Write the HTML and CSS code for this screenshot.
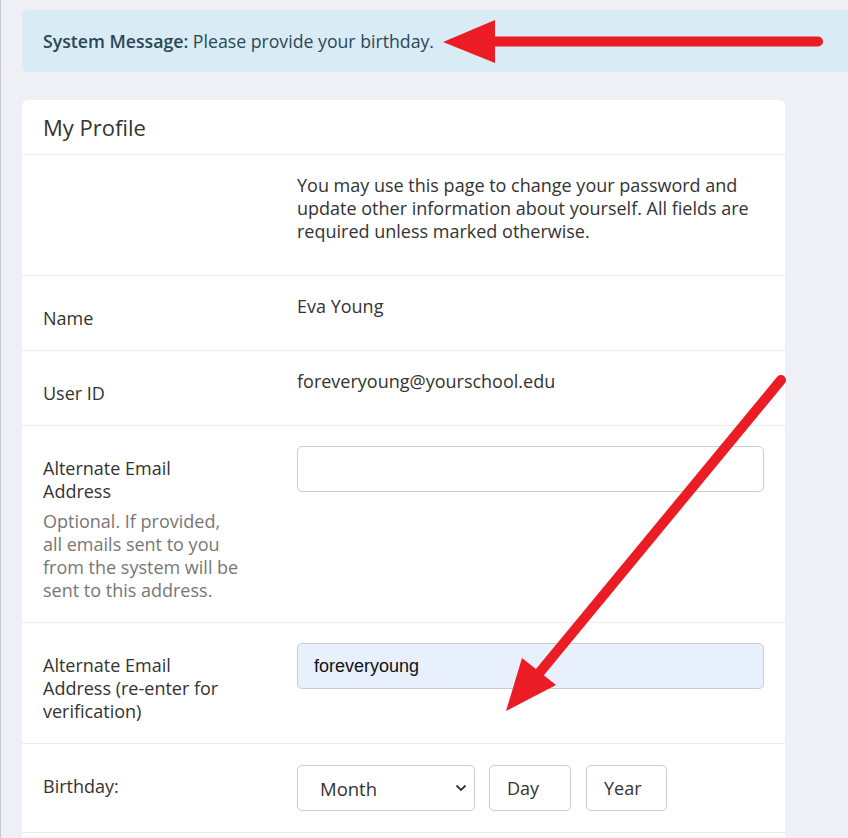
FILE: index.html
```html
<!DOCTYPE html>
<html lang="en">
<head>
  <meta charset="UTF-8">
  <meta name="viewport" content="width=device-width, initial-scale=1.0">
  <title>My Profile</title>
  <link rel="stylesheet" href="styles.css">
</head>
<body>
  <div class="page">
    <div class="alert">
      <b>System Message:</b>&nbsp;Please provide your birthday.
    </div>

    <div class="card">
      <div class="card-header">My Profile</div>

      <div class="row intro">
        <div class="label"></div>
        <div class="value">
          You may use this page to change your password and update other information about yourself. All fields are required unless marked otherwise.
        </div>
      </div>

      <div class="row">
        <div class="label">Name</div>
        <div class="value">Eva Young</div>
      </div>

      <div class="row">
        <div class="label">User ID</div>
        <div class="value">foreveryoung@yourschool.edu</div>
      </div>

      <div class="row">
        <div class="label">
          <label for="altEmail">Alternate Email Address</label>
          <div class="hint">Optional. If provided, all emails sent to you from the system will be sent to this address.</div>
        </div>
        <div class="value">
          <input type="text" id="altEmail" class="field">
        </div>
      </div>

      <div class="row">
        <div class="label">
          <label for="altEmail2">Alternate Email Address (re-enter for verification)</label>
        </div>
        <div class="value">
          <input type="text" id="altEmail2" class="field autofill" value="foreveryoung">
        </div>
      </div>

      <div class="row">
        <div class="label">Birthday:</div>
        <div class="value birthday">
          <div class="select-wrap">
            <select class="month">
              <option>Month</option>
            </select>
            <svg class="chevron" width="12" height="8" viewBox="0 0 12 8"><path d="M1.5 1.5 6 6l4.5-4.5" fill="none" stroke="#333" stroke-width="1.8"/></svg>
          </div>
          <input type="text" class="small day" placeholder="Day">
          <input type="text" class="small year" placeholder="Year">
        </div>
      </div>
    </div>
  </div>

  <!-- annotation arrows drawn over the screenshot -->
  <svg class="arrows" width="848" height="838" viewBox="0 0 848 838">
    <line x1="818" y1="41.5" x2="490" y2="41.5" stroke="#ec1c24" stroke-width="10" stroke-linecap="round"/>
    <polygon points="443,42 495,20 495,63" fill="#ec1c24"/>
    <line x1="781" y1="380" x2="540" y2="672" stroke="#ec1c24" stroke-width="10" stroke-linecap="round"/>
    <polygon points="506,711 522,658 556,685" fill="#ec1c24"/>
  </svg>
</body>
</html>
```

FILE: styles.css
```css
/* General Styling */
body {
  margin: 0;
  height: 100vh;
  font-family: "Open Sans", sans-serif;
  font-size: 18px;
  color: #333;
  background-color: #eff0f5;
  border-left: 1px solid #c8c8c8;
  overflow: hidden;
}

.page {
  padding: 10px 0 0 21px;
}

.alert {
  height: 62px;
  display: flex;
  align-items: center;
  padding: 0 21px;
  background-color: #d9ecf5;
  color: #2c4656;
  border-radius: 5px 0 0 5px;
  margin-bottom: 28px;
  font-size: 17.7px;
}

.alert b {
  font-weight: 600;
}

/* Card */
.card {
  width: 763px;
  background-color: #fff;
  border-radius: 6px;
  padding-bottom: 20px;
}

.card-header {
  height: 54px;
  display: flex;
  align-items: center;
  padding: 0 21px;
  font-size: 22px;
  border-bottom: 1px solid #ececec;
}

.row {
  display: grid;
  grid-template-columns: 254px 1fr;
  padding: 0 21px;
  border-bottom: 1px solid #ececec;
  line-height: 23px;
}

.label {
  padding: 31px 56px 20px 0;
}

.value {
  padding: 19px 0 20px;
}

.intro .value {
  padding-bottom: 32px;
}

.hint {
  margin-top: 7px;
  color: #777;
}

/* Inputs */
.field {
  box-sizing: border-box;
  width: 467px;
  height: 46px;
  padding: 0 16px;
  border: 1px solid #ccc;
  border-radius: 5px;
  font-family: "Liberation Sans", Arial, sans-serif;
  font-size: 18px;
  color: #111;
  background-color: #fff;
  margin-top: 1px;
}

.field.autofill {
  background-color: #e8f0fe;
}

.birthday {
  display: flex;
  gap: 14px;
  padding-top: 21px;
  padding-bottom: 21px;
}

.select-wrap {
  position: relative;
}

.month {
  appearance: none;
  box-sizing: border-box;
  width: 178px;
  height: 46px;
  padding: 0 22px;
  border: 1px solid #ccc;
  border-radius: 5px;
  background-color: #fff;
  font-family: "Open Sans", sans-serif;
  font-size: 18.5px;
  color: #333;
}

.chevron {
  position: absolute;
  right: 8px;
  top: 19px;
}

.small {
  box-sizing: border-box;
  height: 46px;
  padding: 0 17px;
  border: 1px solid #ccc;
  border-radius: 5px;
  font-family: "Open Sans", sans-serif;
  font-size: 18px;
}

.small::placeholder {
  color: #333;
}

.day {
  width: 82px;
}

.year {
  width: 81px;
  margin-left: 1px;
}

.arrows {
  position: absolute;
  left: 0;
  top: 0;
  pointer-events: none;
}
```
